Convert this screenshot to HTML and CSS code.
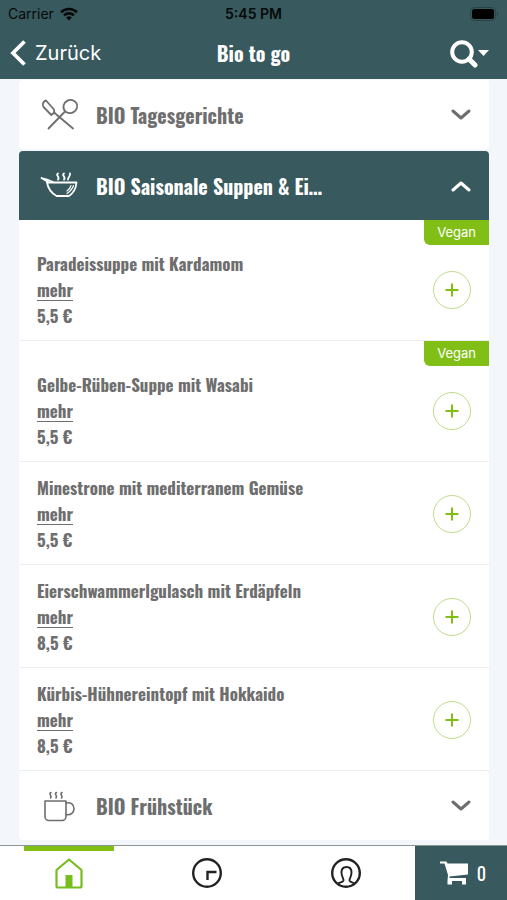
FILE: index.html
```html
<!DOCTYPE html>
<html lang="de">
<head>
  <meta charset="UTF-8">
  <meta name="viewport" content="width=device-width, initial-scale=1.0">
  <title>Bio to go</title>
  <link rel="stylesheet" href="styles.css">
</head>
<body>
  <header>
    <div class="status-bar">
      <div class="carrier">
        Carrier
        <svg width="18" height="14" viewBox="0 0 18 14" fill="none" stroke="#05090a" stroke-width="2.6">
          <path d="M1 5.2a11.5 11.5 0 0 1 16 0M4 8.4a7.2 7.2 0 0 1 10 0"/>
          <path d="M9 13.4L6.2 10.6a4 4 0 0 1 5.6 0z" fill="#05090a" stroke="none"/>
        </svg>
      </div>
      <div class="time">5:45 PM</div>
      <div class="battery">
        <svg width="29" height="14" viewBox="0 0 29 14">
          <rect x="0.5" y="0.5" width="25" height="13" rx="4" fill="none" stroke="#294447"/>
          <rect x="2" y="2" width="22" height="10" rx="2.5" fill="#000"/>
          <path d="M27 5c1.5.6 1.5 3.4 0 4z" fill="#294447"/>
        </svg>
      </div>
    </div>
    <nav class="nav-bar">
      <a href="#" class="back">
        <svg width="17" height="26" viewBox="0 0 17 26" fill="none" stroke="currentColor" stroke-width="3.8"><path d="M14.5 1.5L3 13l11.5 11.5"/></svg>
        Zurück
      </a>
      <h1>Bio to go</h1>
      <button type="button" class="search" aria-label="Suche">
        <svg width="40" height="30" viewBox="0 0 40 30" fill="none" stroke="#fff">
          <circle cx="13" cy="14" r="9.8" stroke-width="4"/>
          <path d="M20 21l6 6" stroke-width="5" stroke-linecap="round"/>
          <path d="M29 12h11l-5.5 6z" fill="#fff" stroke="none"/>
        </svg>
      </button>
    </nav>
  </header>

  <main>
    <button type="button" class="category">
      <svg class="category-icon" width="40" height="36" viewBox="0 0 40 36" fill="none" stroke="currentColor" stroke-width="1.8" stroke-linecap="round" stroke-linejoin="round">
        <ellipse cx="30.3" cy="9.5" rx="7" ry="6.5" transform="rotate(-30 30.3 9.5)"/>
        <path d="M25 14.5L8.5 31.5"/>
        <path d="M6 3.5l8 9 .3 3-3 2.5-7.800-8C2 8 3 4 6 3.500z"/>
        <path d="M14 15.5l19 16"/>
      </svg>
      <span class="category-name">BIO Tagesgerichte</span>
      <svg class="chevron" width="20" height="12" viewBox="0 0 20 12"><path d="M2 2l8 7 8-7"/></svg>
    </button>

    <section>
      <button type="button" class="category open" aria-expanded="true">
        <svg class="category-icon" width="40" height="36" viewBox="0 0 40 36" fill="none" stroke="currentColor" stroke-width="1.8" stroke-linecap="round" stroke-linejoin="round">
          <path d="M7 14.5h29.500c-.5 6-3 10.500-7.500 13.500H16.500C11.500 25 8 20.500 7 14.5z"/>
          <path d="M8 14L1.500 10l5.500 1.500 6 2.500"/>
          <path d="M33.500 17.500c-1 3.500-3.500 6-6.500 8M31 17.500c-.5 2-2 4-4 5.500" stroke-width="1.2"/>
          <path d="M18 5.500c-3 2 2.500 3.500 0 6M24 5.500c-3 2 2.500 3.500 0 6M30 5.500c.5 3-2 3.500-2 6"/>
        </svg>
        <span class="category-name">BIO Saisonale Suppen &amp; Ei…</span>
        <svg class="chevron" width="20" height="12" viewBox="0 0 20 12"><path d="M2 10l8-7 8 7"/></svg>
      </button>

      <ul class="items">
        <li class="item tagged">
          <span class="tag">Vegan</span>
          <div class="item-text">
            <div>Paradeissuppe mit Kardamom</div>
            <a href="#">mehr</a>
            <div>5,5 €</div>
          </div>
          <button type="button" class="add" aria-label="Hinzufügen"><svg width="14" height="14" viewBox="0 0 14 14"><path d="M7 0.5v13M0.5 7h13"/></svg></button>
        </li>
        <li class="item tagged">
          <span class="tag">Vegan</span>
          <div class="item-text">
            <div>Gelbe-Rüben-Suppe mit Wasabi</div>
            <a href="#">mehr</a>
            <div>5,5 €</div>
          </div>
          <button type="button" class="add" aria-label="Hinzufügen"><svg width="14" height="14" viewBox="0 0 14 14"><path d="M7 0.5v13M0.5 7h13"/></svg></button>
        </li>
        <li class="item">
          <div class="item-text">
            <div>Minestrone mit mediterranem Gemüse</div>
            <a href="#">mehr</a>
            <div>5,5 €</div>
          </div>
          <button type="button" class="add" aria-label="Hinzufügen"><svg width="14" height="14" viewBox="0 0 14 14"><path d="M7 0.5v13M0.5 7h13"/></svg></button>
        </li>
        <li class="item">
          <div class="item-text">
            <div>Eierschwammerlgulasch mit Erdäpfeln</div>
            <a href="#">mehr</a>
            <div>8,5 €</div>
          </div>
          <button type="button" class="add" aria-label="Hinzufügen"><svg width="14" height="14" viewBox="0 0 14 14"><path d="M7 0.5v13M0.5 7h13"/></svg></button>
        </li>
        <li class="item">
          <div class="item-text">
            <div>Kürbis-Hühnereintopf mit Hokkaido</div>
            <a href="#">mehr</a>
            <div>8,5 €</div>
          </div>
          <button type="button" class="add" aria-label="Hinzufügen"><svg width="14" height="14" viewBox="0 0 14 14"><path d="M7 0.5v13M0.5 7h13"/></svg></button>
        </li>
      </ul>
    </section>

    <button type="button" class="category">
      <svg class="category-icon" width="40" height="36" viewBox="0 0 40 36" fill="none" stroke="currentColor" stroke-width="1.6" stroke-linecap="round" stroke-linejoin="round">
        <path d="M5 13h21v15.500a4 4 0 0 1-4 4H9a4 4 0 0 1-4-4z"/>
        <path d="M26 15c5-1 8 1.500 8 5.500s-3 7-8 6"/>
        <path d="M11 4.500c-3 1.500 1.500 3-.5 5.500M16.500 4.500c-3 1.500 1.500 3-.5 5.500M22 4.500c-3 1.500 1.500 3-.5 5.500"/>
      </svg>
      <span class="category-name">BIO Frühstück</span>
      <svg class="chevron" width="20" height="12" viewBox="0 0 20 12"><path d="M2 2l8 7 8-7"/></svg>
    </button>
  </main>

  <footer class="tab-bar">
    <a href="#" class="tab active" aria-label="Start">
      <svg width="32" height="32" viewBox="0 0 32 32" fill="none" stroke="currentColor" stroke-width="2.2" stroke-linejoin="round">
        <path d="M16 2.500l12.500 10.500v16a1.500 1.500 0 0 1-1.500 1.500H5a1.500 1.500 0 0 1-1.500-1.500V13z"/>
        <path d="M12.500 30V18h7v12z" fill="currentColor" stroke="none"/>
      </svg>
    </a>
    <a href="#" class="tab" aria-label="Bestellungen">
      <svg width="32" height="32" viewBox="0 0 32 32" fill="none" stroke="currentColor" stroke-width="2.4">
        <circle cx="16" cy="16" r="13.800"/>
        <path d="M16.500 23v-8h9"/>
      </svg>
    </a>
    <a href="#" class="tab" aria-label="Profil">
      <svg width="32" height="32" viewBox="0 0 32 32" fill="none" stroke="currentColor" stroke-width="2.4">
        <circle cx="16" cy="16" r="13.800"/>
        <path d="M8 26.500c2-1.500 5-1 5.500-3 .3-2-2-3.500-2-8 0-3.500 2-5.500 5-5.500s5 2 5 5.500c0 4.500-2.300 6-2 8 .5 2 3.500 1.500 5 3" stroke-width="1.9"/>
      </svg>
    </a>
    <a href="#" class="cart" aria-label="Warenkorb">
      <svg width="28" height="24" viewBox="0 0 28 24" fill="#fff">
        <path d="M0 .5h6.500l1 2H28v11L9.500 15.500v1.500H26v6.500h-4V20H12v3.500H7.500V20L8 14 4.500 2.500H0z"/>
      </svg>
      <span>0</span>
    </a>
  </footer>
</body>
</html>
```
FILE: styles.css
```css
* {
  box-sizing: border-box;
}

body {
  display: flex;
  flex-direction: column;
  height: 100vh;
  margin: 0;
  font-family: Oswald, "Liberation Sans Narrow", "Liberation Sans", sans-serif;
  background-color: #f3f6fa;
  color: #6e6e6e;
}

svg {
  display: block;
  flex: none;
}

button {
  font-family: inherit;
  color: inherit;
  border: none;
  padding: 0;
  cursor: pointer;
}

header {
  background-color: #38595e;
}

.status-bar,
.nav-bar {
  display: grid;
  grid-template-columns: 1fr auto 1fr;
  align-items: center;
}

.status-bar {
  height: 27px;
  padding: 0 8px;
  font-family: Inter, sans-serif;
  font-size: 14px;
  color: #05090a;
}

.carrier {
  display: flex;
  align-items: center;
  gap: 6px;
}

.time {
  font-weight: 600;
}

.battery,
.search {
  justify-self: end;
}

.nav-bar {
  height: 52px;
  padding: 0 10px;
  color: white;
}

.back {
  display: flex;
  align-items: center;
  gap: 8px;
  font-family: Inter, sans-serif;
  font-size: 20px;
  color: white;
  text-decoration: none;
}

h1 {
  margin: 0;
  font-size: 20px;
}

.search {
  padding-right: 8px;
  background: none;
}

main {
  flex: 1;
  min-height: 0;
  overflow: hidden;
  padding: 1px 18px 0 19px;
}

.category {
  display: flex;
  align-items: center;
  width: 100%;
  height: 69px;
  padding: 0 18px 0 21px;
  margin-bottom: 2px;
  border-radius: 4px;
  background-color: white;
  font-size: 20px;
  font-weight: bold;
  text-align: left;
}

.category.open {
  margin-bottom: 0;
  border-radius: 4px 4px 0 0;
  background-color: #38595e;
  color: white;
}

.category-icon {
  margin-right: 16px;
}

.category-name {
  margin-right: auto;
  white-space: nowrap;
}

.chevron {
  fill: none;
  stroke: currentColor;
  stroke-width: 3;
  stroke-linecap: round;
  stroke-linejoin: round;
}

.items {
  margin: 0;
  padding: 0;
  list-style: none;
}

.item {
  position: relative;
  display: flex;
  align-items: center;
  justify-content: space-between;
  padding: 13px 18px 11px;
  border-bottom: 1px solid #eceef0;
  background-color: white;
  font-size: 17px;
  font-weight: bold;
  line-height: 26px;
}

.item.tagged {
  padding-top: 31px;
}

.item a {
  display: block;
  width: fit-content;
  color: inherit;
  text-underline-offset: 3px;
}

.tag {
  position: absolute;
  top: 0;
  right: 0;
  padding: 0 13px;
  border-radius: 0 0 0 6px;
  background-color: #81bf17;
  color: white;
  font-family: Inter, sans-serif;
  font-size: 13px;
  font-weight: normal;
  line-height: 25px;
}

.add {
  display: flex;
  align-items: center;
  justify-content: center;
  width: 38px;
  height: 38px;
  border: 1px solid #bfdc88;
  border-radius: 50%;
  background-color: white;
}

.add svg {
  stroke: #81bf17;
  stroke-width: 2;
}

.tab-bar {
  display: grid;
  grid-template-columns: 3fr 3fr 3fr 2fr;
  height: 55px;
  border-top: 1px solid #8b9694;
  background-color: white;
}

.tab {
  display: flex;
  align-items: center;
  justify-content: center;
  color: #222;
}

.tab.active {
  margin: 0 24px;
  border-top: 5px solid #81bf17;
  padding-bottom: 5px;
  color: #76bd1d;
}

.cart {
  display: flex;
  align-items: center;
  justify-content: center;
  gap: 9px;
  padding-left: 4px;
  background-color: #38595e;
  color: white;
  font-size: 18px;
  text-decoration: none;
}
```
